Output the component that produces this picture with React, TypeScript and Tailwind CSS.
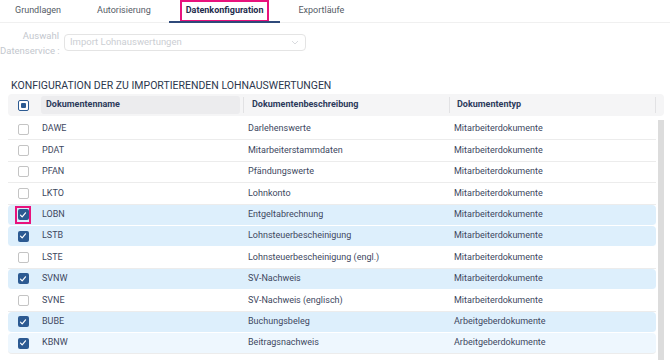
import React from "react";

type Row = { name: string; desc: string; type: string; checked: boolean; tone?: "sel" | "hover"; mark?: boolean };

const rows: Row[] = [
  { name: "DAWE", desc: "Darlehenswerte", type: "Mitarbeiterdokumente", checked: false },
  { name: "PDAT", desc: "Mitarbeiterstammdaten", type: "Mitarbeiterdokumente", checked: false },
  { name: "PFAN", desc: "Pfändungswerte", type: "Mitarbeiterdokumente", checked: false },
  { name: "LKTO", desc: "Lohnkonto", type: "Mitarbeiterdokumente", checked: false },
  { name: "LOBN", desc: "Entgeltabrechnung", type: "Mitarbeiterdokumente", checked: true, tone: "sel", mark: true },
  { name: "LSTB", desc: "Lohnsteuerbescheinigung", type: "Mitarbeiterdokumente", checked: true, tone: "sel" },
  { name: "LSTE", desc: "Lohnsteuerbescheinigung (engl.)", type: "Mitarbeiterdokumente", checked: false },
  { name: "SVNW", desc: "SV-Nachweis", type: "Mitarbeiterdokumente", checked: true, tone: "sel" },
  { name: "SVNE", desc: "SV-Nachweis (englisch)", type: "Mitarbeiterdokumente", checked: false },
  { name: "BUBE", desc: "Buchungsbeleg", type: "Arbeitgeberdokumente", checked: true, tone: "sel" },
  { name: "KBNW", desc: "Beitragsnachweis", type: "Arbeitgeberdokumente", checked: true, tone: "hover" },
];

const tabs = ["Grundlagen", "Autorisierung", "Datenkonfiguration", "Exportläufe"];

function Checkbox({ checked }: { checked: boolean }) {
  if (checked) {
    return (
      <span className="flex h-[11px] w-[11px] items-center justify-center rounded-[2px] bg-[#2c5a92]">
        <svg width="8" height="8" viewBox="0 0 8 8" fill="none">
          <path d="M1.5 4.2 L3.2 5.9 L6.5 1.8" stroke="white" strokeWidth="1.2" strokeLinecap="round" strokeLinejoin="round" />
        </svg>
      </span>
    );
  }
  return <span className="block h-[11px] w-[11px] rounded-[2px] border border-[#c4c4c4] bg-white" />;
}

export default function App() {
  return (
    <div className="h-[360px] w-[670px] overflow-hidden bg-white font-['Roboto',sans-serif] text-[9px] text-[#3d4760]">
      {/* tabs */}
      <div className="flex h-[23px] border-b border-[#f0f0f0]">
        <div className="-ml-[3px] flex">
          {tabs.map((t) =>
            t === "Datenkonfiguration" ? (
              <div key={t} className="relative flex items-center px-[11px]">
                <span className="border-2 border-[#e8127c] px-[4px] py-[2px] text-[9px] font-bold text-[#1f2d4d]">{t}</span>
                <span className="absolute bottom-[-1px] left-0 right-0 h-[2px] bg-[#2f4a7a]" />
              </div>
            ) : (
              <div key={t} className="flex items-center px-[18px] text-[9px] text-[#555b66]">
                {t}
              </div>
            )
          )}
        </div>
      </div>

      {/* form */}
      <div className="mt-[5px] flex items-start">
        <div className="w-[59px] whitespace-nowrap text-right text-[9.5px] leading-[15px] text-[#c3c7ce]">
          <div>Auswahl</div>
          <div>Datenservice :</div>
        </div>
        <div className="ml-[5px] mt-[6px] flex h-[17px] w-[242px] items-center justify-between rounded-[4px] border border-[#e4e4e4] pl-[5px] pr-[6px] text-[9.5px] text-[#cbced3]">
          <span>Import Lohnauswertungen</span>
          <svg width="8" height="5" viewBox="0 0 8 5" fill="none">
            <path d="M1 1 L4 4 L7 1" stroke="#d5d7db" strokeWidth="0.9" />
          </svg>
        </div>
      </div>

      {/* title */}
      <div className="ml-[11px] mt-[21px] text-[10.5px] leading-[14px] text-[#2c374d]">
        KONFIGURATION DER ZU IMPORTIERENDEN LOHNAUSWERTUNGEN
      </div>

      {/* table */}
      <div className="ml-[8px] mt-[1px] w-[656px]">
        <div className="flex h-[22px] items-center rounded-[4px] bg-[#f5f5f6] font-bold text-[#2d3b5c]">
          <div className="flex w-[30px] justify-center">
            <span className="flex h-[11px] w-[11px] items-center justify-center rounded-[2px] border border-[#2c5a92] bg-white">
              <span className="h-[5px] w-[5px] rounded-[1px] bg-[#2c5a92]" />
            </span>
          </div>
          <div className="mx-[3px] flex h-[18px] w-[199px] items-center rounded-[3px] bg-[#ececee] pl-[5px]">Dokumentenname</div>
          <div className="h-[16px] w-px bg-[#e2e2e4]" />
          <div className="flex w-[205px] items-center pl-[8px]">Dokumentenbeschreibung</div>
          <div className="h-[16px] w-px bg-[#e2e2e4]" />
          <div className="flex flex-1 items-center pl-[7px]">Dokumententyp</div>
          <div className="mr-[8px] h-[16px] w-px bg-[#e2e2e4]" />
        </div>

        <div className="mt-[3px] flex">
          <div className="w-[648px]">
            {rows.map((r) => (
              <div
                key={r.name}
                className={`flex h-[21.4px] items-center border-b ${
                  r.tone === "sel"
                    ? "rounded-[4px] border-white bg-[#ddeffc]"
                    : r.tone === "hover"
                    ? "rounded-[4px] border-[#ececec] bg-[#eef7fe]"
                    : "border-[#ececec]"
                }`}
              >
                <div className="flex w-[30px] justify-center">
                  {r.mark ? (
                    <span className="flex h-[18px] w-[16px] items-center justify-center border-2 border-[#e8127c]">
                      <Checkbox checked={r.checked} />
                    </span>
                  ) : (
                    <Checkbox checked={r.checked} />
                  )}
                </div>
                <div className="w-[206px] pl-[4px]">{r.name}</div>
                <div className="w-[206px] pl-[4px]">{r.desc}</div>
                <div className="flex-1 pl-[4px]">{r.type}</div>
              </div>
            ))}
          </div>
          <div className="ml-[2px] mt-[1px] h-[240px] w-[6px] bg-[#dcdcdc]" />
        </div>
      </div>
    </div>
  );
}
